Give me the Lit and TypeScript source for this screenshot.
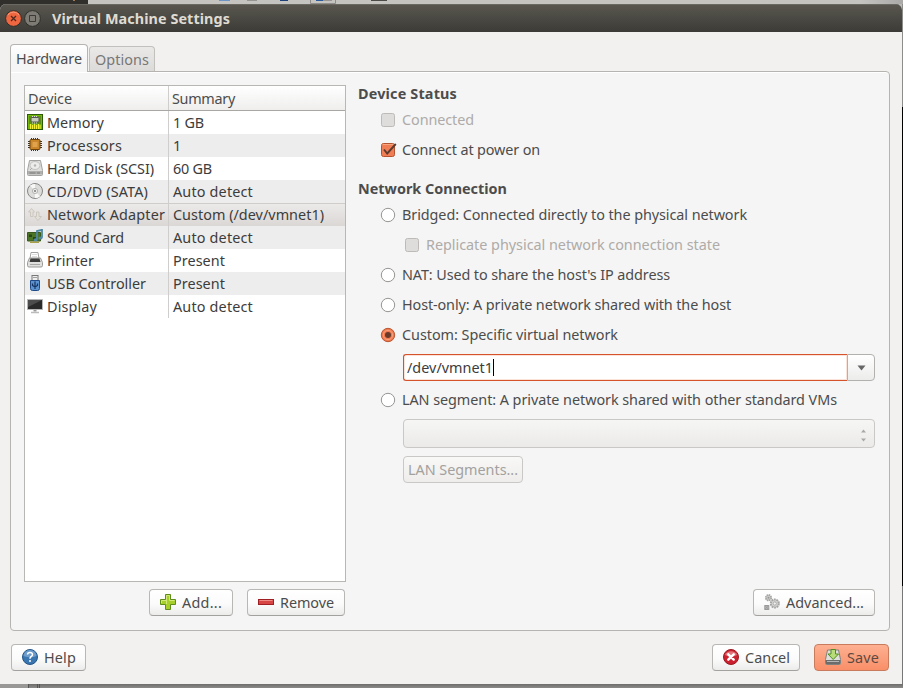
import { LitElement, html, css, svg, nothing } from "lit";
import { customElement, property } from "lit/decorators.js";
import { classMap } from "lit/directives/class-map.js";

/* A run of text tracked so that it fills a given width. */
@customElement("fit-text")
class FitText extends LitElement {
  static styles = css`
    :host { display: inline-block; white-space: pre; flex: none; }
  `;
  @property({ type: Number }) w = 0;
  @property() text = "";
  render() {
    return html`<span>${this.text}</span>`;
  }
  updated() {
    const s = this.renderRoot.querySelector("span") as HTMLElement;
    s.style.letterSpacing = "0px";
    const natural = s.getBoundingClientRect().width;
    if (natural > 0) s.style.letterSpacing = (this.w - natural) / this.text.length + "px";
  }
}

const t = (text: string, w: number) => html`<fit-text .text=${text} .w=${w}></fit-text>`;
const icon = (body: unknown) => html`<svg class="icon" width="16" height="16" viewBox="0 0 16 16">${body}</svg>`;

const icons = {
  memory: svg`<rect x=".5" y=".5" width="15" height="15" fill="#73b80c" stroke="#2c5a06"/>
    <rect x="2" y="2" width="12" height="8" fill="#5c8f12"/>
    <rect x="4" y="3.500" width="8" height="4.500" rx="1" fill="#c9cdbd" stroke="#555"/>
    <path d="M5.500 2v1M7.500 2v1M9.500 2v1M5.500 8.500v1M7.500 8.500v1M9.500 8.500v1" stroke="#ddd"/>
    <path d="M3.500 10v5M5.500 11v4M7.500 10v5M9.500 11v4M11.500 10v5M13 11v4" stroke="#f4ef35"/>`,
  cpu: svg`<path d="M4.500 1v13M6.500 1v13M8.500 1v13M10.500 1v13M1 4.500h14M1 6.500h14M1 8.500h14M1 10.500h14" stroke="#3a342b"/>
    <rect x="3" y="2.500" width="10" height="10" rx="1" fill="#ca8626" stroke="#70430c"/>
    <rect x="5" y="4.500" width="6" height="6" fill="#e0a24b" stroke="#c8862f"/>`,
  disk: svg`<path d="M2.500.5h11l2 10v4q0 1-1 1h-13q-1 0-1-1v-4z" fill="#dededc" stroke="#a2a2a0"/>
    <ellipse cx="8" cy="5.500" rx="5" ry="4" fill="#ececea" stroke="#c2c2c0"/><circle cx="8" cy="5.500" r="1.200" fill="#b5b5b3"/>
    <path d="M1 11h14v3.500H1z" fill="#b0b0ae"/><path d="M2.500 13h6M10 13h3" stroke="#7a7a78"/><path d="M5 8l-2 2" stroke="#aaa"/>`,
  cd: svg`<circle cx="8" cy="8" r="7.500" fill="#dcdcda" stroke="#868684"/>
    <path d="M8 8L3 2.500A7 7 0 0 1 8 1zM8 8l5 5.500A7 7 0 0 1 8 15z" fill="#f8f8f7"/>
    <circle cx="8" cy="8" r="2.600" fill="#efefed" stroke="#b4b4b2"/><circle cx="8" cy="8" r="1" fill="#777"/>`,
  net: svg`<path d="M4.500 2.500l3 3.500H6v4.500H3.500V6H1.500zM11 14.500l-3.500-4H9.500V6H12v4.500h2.500z" fill="#e3dfd9" stroke="#c6c1b9" stroke-width=".8"/>`,
  sound: svg`<path d="M.5 3.500h13v8.500H.5z" fill="#4b7426" stroke="#3a5a20"/><path d="M3 12.500h9v1.500H3z" fill="#a8a04a"/>
    <path d="M2 5.500h3v2.500H2zM6 8h3v2.500H6z" fill="#29431a"/><path d="M10 10.500V2L15 .8v8" fill="none" stroke="#4f87a3" stroke-width="1.800"/>
    <ellipse cx="8.700" cy="10.800" rx="2" ry="1.500" fill="#4f87a3"/><ellipse cx="13.500" cy="9" rx="2" ry="1.500" fill="#4f87a3"/>`,
  printer: svg`<path d="M4 .5h7l1 6H3z" fill="#fff" stroke="#a3a3a1"/><path d="M5 2.500h5M5 4.500h5" stroke="#ddd"/>
    <path d="M2.500 6h11l2 4.500v3q0 1.500-1.500 1.500H2Q.5 15 .5 13.500v-3z" fill="#e0e0de" stroke="#9a9a98"/>
    <path d="M3.500 6.500h9l1 3.500h-11z" fill="#3c3c3c"/><path d="M3 12.500h10" stroke="#a8a8a6"/>`,
  usb: svg`<rect x="5" y=".5" width="6" height="5" fill="#eee" stroke="#777"/><path d="M6.500 2.500h1M8.500 2.500h1" stroke="#555"/>
    <path d="M3.500 5.500h9v8q0 2-2 2h-5q-2 0-2-2z" fill="#5b92cf" stroke="#1f4a87"/>
    <path d="M8 6.500v7.500M5.500 8.500v2L8 12l2.500-1.500v-2" fill="none" stroke="#16335f" stroke-width="1.200"/>`,
  display: svg`<path d="M.5 1.500h15v10H.5z" fill="#2a2a2a" stroke="#b5b5b3"/><path d="M1 2h14L1 9z" fill="#4c4c4c"/>
    <path d="M6.500 12h3v1.500h-3z" fill="#999"/><path d="M4 14.500h8" stroke="#bbb" stroke-width="1.500"/>`,
  add: svg`<path d="M5.500.5h5v5h5v5h-5v5h-5v-5h-5v-5h5z" fill="#a6cf2c" stroke="#5f8d1c"/>
    <path d="M6.500 10V1.500h3v5h5M1.500 9V6.500h5" fill="none" stroke="#d3e87a"/>`,
  remove: svg`<rect x=".5" y="5.500" width="15" height="5" fill="#d84545" stroke="#a01f22"/><path d="M1.500 6.500h13" stroke="#ef8b85"/>`,
  help: svg`<circle cx="8" cy="8" r="7.500" fill="#3a76b0" stroke="#245589"/><path d="M1.500 7a6.500 6 0 0 1 13 0q-6 2.500-13 0" fill="#6e9dcb"/>
    <path d="M5.500 5.500Q5.600 3.500 8 3.500t2.500 2q0 1.300-1.300 2T8 9.800" fill="none" stroke="#fff" stroke-width="1.500"/><circle cx="8" cy="12" r="1" fill="#fff"/>`,
  cancel: svg`<circle cx="8" cy="8" r="7.500" fill="#cb2030" stroke="#9c1a22"/><path d="M2 6a6.500 6 0 0 1 12 0q-6 3-12 0" fill="#e2747a"/>
    <path d="M5.300 5.300l5.400 5.400M10.700 5.300l-5.400 5.400" stroke="#fff" stroke-width="2.400" stroke-linecap="round"/>`,
  save: svg`<path d="M2.500 1h11l2 9.500v4q0 1-1 1h-13q-1 0-1-1v-4z" fill="#dededc" stroke="#80807e"/>
    <path d="M1 11h14v4H1z" fill="#6c6c6a"/><path d="M2 12.500h12" stroke="#b5b5b3"/>
    <path d="M6 .5h4.500v4.500h3L8.200 10.500 3 5h3z" fill="#b9dc7b" stroke="#4e8f1c"/>`,
  gears: svg`<circle cx="4.500" cy="3.700" r="2.700" fill="#d0d0ce" stroke="#a5a5a3" stroke-width="1.800" stroke-dasharray="1.500 .6"/>
    <circle cx="10.800" cy="9.500" r="4" fill="#d5d5d3" stroke="#a5a5a3" stroke-width="2" stroke-dasharray="1.800 .7"/>
    <circle cx="10.800" cy="9.500" r="1.600" fill="#f3f3f3" stroke="#999" stroke-width=".7"/><circle cx="4.500" cy="3.700" r="1" fill="#999"/>
    <path d="M.8 11.500h4v4h-4zM.8 11.500l4 4M4.800 11.500l-4 4" fill="#bbb" stroke="#999"/>`,
};

const devices: [keyof typeof icons, string, number, string, number][] = [
  ["memory", "Memory", 57, "1 GB", 31],
  ["cpu", "Processors", 75, "1", 8],
  ["disk", "Hard Disk (SCSI)", 107, "60 GB", 39],
  ["cd", "CD/DVD (SATA)", 101, "Auto detect", 80],
  ["net", "Network Adapter", 118, "Custom (/dev/vmnet1)", 151],
  ["sound", "Sound Card", 77, "Auto detect", 80],
  ["printer", "Printer", 47, "Present", 52],
  ["usb", "USB Controller", 99, "Present", 52],
  ["display", "Display", 50, "Auto detect", 80],
];

@customElement("app-root")
class AppRoot extends LitElement {
  static styles = css`
    * { box-sizing: border-box; }
    :host {
      display: flex; flex-direction: column; width: 903px; height: 688px; overflow: hidden;
      font: 14.4px/20px "Noto Sans", "Open Sans", sans-serif; color: #4c4c4c; background: #777;
    }
    .icon { display: block; flex: none; }
    .desk { flex: none; height: 4px; background: linear-gradient(90deg, #302f2b 88px, #c6c4c1 88px 860px, #aaa9a7); }
    .desk svg { display: block; }
    .mid { display: flex; flex: none; height: 680px; background: linear-gradient(90deg, #302f2b 88px, #bdbbb8 88px); }
    .edge { width: 1px; background: linear-gradient(#8d8d8b 0 103px, #000 103px 582px, #777 582px); }
    .win { width: 902px; display: flex; flex-direction: column; background: #f2f1f0; border-radius: 6px 6px 0 0; overflow: hidden; }
    .title {
      height: 28px; flex: none; display: flex; align-items: center; padding: 1px 5px 0; gap: 2px;
      background: linear-gradient(#59574f, #3c3b37); box-shadow: inset 0 1px #6a6860;
      color: #dfdbd2; font-weight: 700;
    }
    .title fit-text { margin-left: 9px; }
    .body { display: flex; flex-direction: column; padding: 12px 13px 0 10px; flex: 1; }
    .tabs { display: flex; align-items: flex-end; gap: 1px; height: 28px; margin-bottom: -1px; position: relative; }
    .tab { border: 1px solid #b6b4b1; border-bottom: 0; border-radius: 4px 4px 0 0; padding-left: 5px; }
    .tab.on { width: 78px; height: 28px; padding-top: 4px; background: linear-gradient(#fff, #f5f5f5 60%); }
    .tab.off { width: 66px; height: 25px; padding-top: 3px; margin-bottom: 1px; background: linear-gradient(#ebe9e8, #dddbd9); color: #777; border-color: #c2c0bd; }
    .panel {
      width: 880px; height: 560px; border: 1px solid #b6b4b1; border-radius: 0 4px 4px 4px; background: #f5f5f5;
      box-shadow: inset 0 1px #fff; padding: 13px 14px 0 13px; display: flex; gap: 12px;
    }
    .left { width: 322px; }
    .tree { width: 322px; height: 497px; border: 1px solid #b9b7b4; background: #fff; }
    .head { display: grid; grid-template-columns: 144px 1fr; height: 25px; border-bottom: 1px solid #a9a7a4; background: linear-gradient(#fff, #efeeed); }
    .head > div { padding: 3px 0 0 3px; }
    .head > div:first-child, .dev { border-right: 1px solid #d0cecc; }
    .row { display: grid; grid-template-columns: 144px 1fr; height: 23px; color: #3c3c3c; }
    .row.alt { background: #ededed; }
    .row.sel { background: linear-gradient(#edebea, #dad7d5); box-shadow: inset 0 1px #cfccc9; }
    .dev { display: flex; gap: 4px; padding: 2px 0 0 2px; }
    .dev .icon { margin-top: 1px; }
    .sum { padding: 2px 0 0 4px; }
    .acts { display: flex; justify-content: flex-end; gap: 14px; margin-top: 7px; padding-right: 1px; }
    .btn {
      height: 27px; border: 1px solid #b9b7b4; border-bottom-color: #a3a19e; border-radius: 4px; display: flex; align-items: center; gap: 6px;
      padding: 1px 0 0 10px; background: linear-gradient(#fff, #fbfbfb 55%, #ececeb); flex: none;
    }
    .btn .icon { margin-top: -2px; }
    .add { width: 84px; } .remove { width: 98px; } .adv { width: 122px; } .help { width: 75px; } .cancel { width: 88px; }
    .save { width: 75px; background: linear-gradient(#fdb091, #f98f69); border-color: #c97b5d; color: #5b4a42; }
    .seg { width: 120px; margin: 8px 0 0 45px; padding-left: 4px; background: linear-gradient(#f8f8f7, #eeedec); color: #a3a19e; border-color: #cac8c6; }
    .right { flex: 1; display: flex; flex-direction: column; margin-top: -2px; }
    h3 { margin: 0; font: inherit; font-weight: 700; height: 22px; line-height: 21px; }
    h3.second { margin-top: 13px; }
    .opt { height: 30px; display: flex; align-items: center; gap: 6px; padding-left: 22px; }
    .opt.in { padding-left: 46px; }
    .opt.dis { color: #aeaba8; }
    .ctl { display: block; overflow: visible; flex: none; width: 16px; height: 16px; }
    .combo { display: flex; height: 27px; margin: 4px 0 4px 45px; }
    .entry { width: 444px; border: 1px solid #d5522b; border-right-width: 0; box-shadow: inset 0 0 0 1px #fbe3da; border-radius: 3px 0 0 3px; background: #fff; color: #3c3c3c; display: flex; align-items: center; padding-left: 3px; }
    .caret { width: 1px; height: 17px; background: #000; }
    .drop { width: 28px; border: 1px solid #b3b1ae; border-radius: 0 4px 4px 0; background: linear-gradient(#fff, #ececeb); display: grid; place-items: center; padding-top: 1px; }
    .select { height: 29px; width: 472px; margin: 4px 0 0 45px; border: 1px solid #cac8c6; border-radius: 4px; background: linear-gradient(#f6f6f5, #ebeae9); display: flex; justify-content: flex-end; align-items: center; padding: 3px 7px 0 0; }
    .right .adv { margin: 106px 0 0 auto; }
    .foot { display: flex; margin-top: 13px; padding-left: 1px; gap: 14px; }
    .grow { flex: 1; }
    .base { flex: none; height: 4px; background: linear-gradient(#6c6c6a, #8d8b8a); }
    .base svg { display: block; }
  `;

  check(on: boolean, dis = false) {
    return html`<svg class="ctl" viewBox="0 0 16 16">
      <rect x="1.500" y="1.500" width="13" height="13" rx="2" fill=${on ? "#f07d54" : dis ? "#dfdddb" : "#fff"} stroke=${on ? "#b4532f" : "#bdbab7"}/>
      ${on ? svg`<path d="M2.500 2.500h11" stroke="#f8a582"/><path d="M4 7.500l3.200 4L15.800 2" fill="none" stroke="#5c3a2e" stroke-width="1.900"/>` : nothing}
    </svg>`;
  }
  radio(on: boolean) {
    return html`<svg class="ctl" viewBox="0 0 16 16">
      <circle cx="8" cy="8" r="6.700" fill=${on ? "#f0794e" : "#fff"} stroke=${on ? "#bb5732" : "#979592"}/>
      ${on ? svg`<circle cx="8" cy="8" r="4.700" fill="none" stroke="#f7a27f"/><circle cx="8" cy="8" r="3" fill="#683b2b"/>` : nothing}
    </svg>`;
  }
  opt(ctl: unknown, text: string, w: number, cls = {}) {
    return html`<div class=${classMap({ opt: true, ...cls })}>${ctl}${t(text, w)}</div>`;
  }

  render() {
    return html`
      <div class="desk"><svg width="903" height="4" viewBox="0 0 903 4">
        <path d="M73 .5h2" stroke="#a07855"/><path d="M219 .5h11" stroke="#6d93c4"/><path d="M247 .5h10" stroke="#979593"/>
        <path d="M280 .5h8" stroke="#1f3f77"/><path d="M310.500 0v3.500h25V0" fill="none" stroke="#8f8d8a"/>
        <path d="M316 .5h7" stroke="#2d5a99"/><path d="M323 .5h9" stroke="#979593"/><path d="M371 .5h16" stroke="#4c4a47"/>
      </svg></div>
      <div class="mid">
        <div class="win">
          <div class="title">
            <svg width="17" height="17" viewBox="0 0 17 17"><circle cx="8.500" cy="8.500" r="7.900" fill="#ee6741" stroke="#30302b"/><path d="M3 5a6.500 6 0 0 1 11 0" fill="none" stroke="#f79a78"/><path d="M6 6l5 5M11 6l-5 5" stroke="#50291d" stroke-width="1.300"/></svg>
            <svg width="17" height="17" viewBox="0 0 17 17"><circle cx="8.500" cy="8.500" r="7.900" fill="#7d7b73" stroke="#30302b"/><path d="M5.500 5.500h6v6h-6z" fill="none" stroke="#3a3935"/></svg>
            ${t("Virtual Machine Settings", 178)}
          </div>
          <div class="body">
            <div class="tabs">
              <div class="tab on">${t("Hardware", 66)}</div>
              <div class="tab off">${t("Options", 54)}</div>
            </div>
            <div class="panel">
              <div class="left">
                <div class="tree">
                  <div class="head"><div>${t("Device", 44)}</div><div>${t("Summary", 63)}</div></div>
                  ${devices.map(([ic, name, nw, sum, sw], i) => html`
                    <div class=${classMap({ row: true, alt: i % 2 === 1, sel: i === 4 })}>
                      <div class="dev">${icon(icons[ic])}${t(name, nw)}</div>
                      <div class="sum">${t(sum, sw)}</div>
                    </div>`)}
                </div>
                <div class="acts">
                  <div class="btn add">${icon(icons.add)}${t("Add...", 40)}</div>
                  <div class="btn remove">${icon(icons.remove)}${t("Remove", 54)}</div>
                </div>
              </div>
              <div class="right">
                <h3>${t("Device Status", 99)}</h3>
                ${this.opt(this.check(false, true), "Connected", 72, { dis: true })}
                ${this.opt(this.check(true), "Connect at power on", 138)}
                <h3 class="second">${t("Network Connection", 149)}</h3>
                ${this.opt(this.radio(false), "Bridged: Connected directly to the physical network", 345)}
                ${this.opt(this.check(false, true), "Replicate physical network connection state", 294, { dis: true, in: true })}
                ${this.opt(this.radio(false), "NAT: Used to share the host's IP address", 268)}
                ${this.opt(this.radio(false), "Host-only: A private network shared with the host", 329)}
                ${this.opt(this.radio(true), "Custom: Specific virtual network", 216)}
                <div class="combo">
                  <div class="entry">${t("/dev/vmnet1", 86)}<span class="caret"></span></div>
                  <div class="drop"><svg width="9" height="6" viewBox="0 0 9 6"><path d="M.5.5h8l-4 5z" fill="#666"/></svg></div>
                </div>
                ${this.opt(this.radio(false), "LAN segment: A private network shared with other standard VMs", 435)}
                <div class="select"><svg width="7" height="13" viewBox="0 0 7 13"><path d="M1 3.500h5l-2.500-3zM1 9.500h5l-2.500 3z" fill="#aaa8a5"/></svg></div>
                <div class="btn seg">${t("LAN Segments...", 110)}</div>
                <div class="btn adv">${icon(icons.gears)}${t("Advanced...", 78)}</div>
              </div>
            </div>
            <div class="foot">
              <div class="btn help">${icon(icons.help)}${t("Help", 32)}</div>
              <div class="grow"></div>
              <div class="btn cancel">${icon(icons.cancel)}${t("Cancel", 45)}</div>
              <div class="btn save">${icon(icons.save)}${t("Save", 32)}</div>
            </div>
          </div>
        </div>
        <div class="edge"></div>
      </div>
      <div class="base"><svg width="903" height="4" viewBox="0 0 903 4"><path d="M0 0h28v4H0z" fill="#9a9896"/><path d="M28.500 0v4M37.500 0v4M39.500 0v4" stroke="#555"/></svg></div>`;
  }
}
